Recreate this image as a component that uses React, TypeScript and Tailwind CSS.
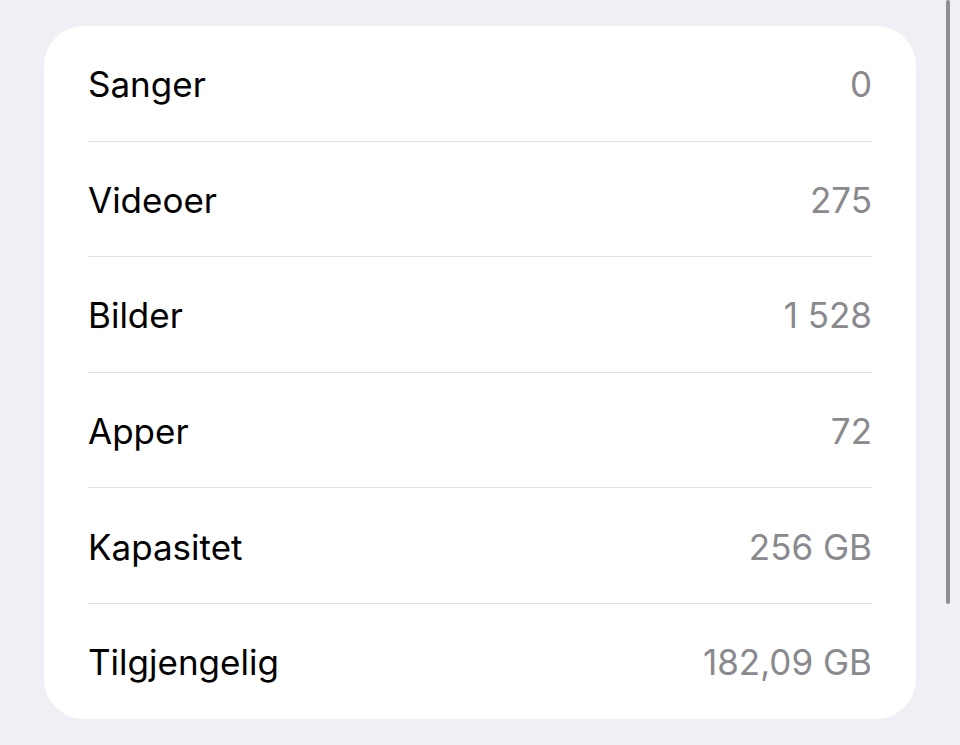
import React from 'react';

const rows = [
  { label: 'Sanger', value: '0' },
  { label: 'Videoer', value: '275' },
  { label: 'Bilder', value: '1 528' },
  { label: 'Apper', value: '72' },
  { label: 'Kapasitet', value: '256 GB' },
  { label: 'Tilgjengelig', value: '182,09 GB' },
];

export default function App() {
  return (
    <div
      className="relative w-[960px] h-[745px] overflow-hidden bg-[#f0eff5] pt-[26px] pl-[44px]"
      style={{ fontFamily: 'Inter, "Noto Sans", sans-serif' }}
    >
      {/* Card */}
      <div className="w-[872px] h-[693px] bg-white rounded-[40px] flex flex-col">
        {rows.map((row, i) => (
          <React.Fragment key={row.label}>
            {i > 0 && <div className="h-px mx-[44px] bg-[#e0e0e4]" />}
            <div className="h-[114.6px] flex items-center justify-between px-[44px] pt-[3px] text-[35px] leading-none">
              <span className="text-black">{row.label}</span>
              <span className="text-[#8a8a8e]">{row.value}</span>
            </div>
          </React.Fragment>
        ))}
      </div>

      {/* Scroll indicator */}
      <div className="absolute left-[946px] top-0 w-[4px] h-[604px] rounded-full bg-[#8e8e93]" />
    </div>
  );
}
